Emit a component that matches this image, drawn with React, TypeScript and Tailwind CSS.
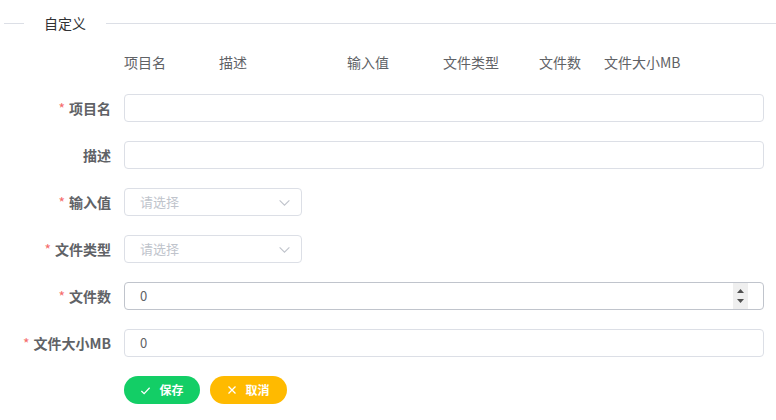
import React from "react";

const font = { fontFamily: '"Noto Sans CJK SC", "Noto Sans", sans-serif' };

function Label({ text, req }: { text: string; req?: boolean }) {
  return (
    <div className="w-[124px] shrink-0 pr-[13px] flex items-center justify-end text-[14px] font-bold text-[#606266]">
      {req && <span className="text-[#f56c6c] mr-[4px] font-normal">*</span>}
      <span>{text}</span>
    </div>
  );
}

function Chevron() {
  return (
    <svg width="13" height="13" viewBox="0 0 12 12" fill="none" stroke="#c0c4cc" strokeWidth="1">
      <path d="M1.5 4 L6 8.5 L10.5 4" />
    </svg>
  );
}

function Select() {
  return (
    <div className="w-[178px] h-[28px] border border-[#dcdfe6] rounded-[4px] flex items-center justify-between pl-[15px] pr-[10px] text-[13px] text-[#c0c4cc]">
      <span>请选择</span>
      <Chevron />
    </div>
  );
}

function Input({ value, hover }: { value?: string; hover?: boolean }) {
  return (
    <div
      className={`flex-1 h-[28px] border rounded-[4px] flex items-center pl-[15px] text-[13px] text-[#606266] ${
        hover ? "border-[#c0c4cc]" : "border-[#dcdfe6]"
      }`}
    >
      <span className="flex-1">{value}</span>
    </div>
  );
}

function NumberInput() {
  return (
    <div className="flex-1 h-[28px] border border-[#c0c4cc] rounded-[4px] flex items-center pl-[15px] pr-[15px] text-[13px] text-[#606266]">
      <span className="flex-1">0</span>
      <div className="w-[15px] h-[26px] bg-[#efefef] flex flex-col items-center justify-center gap-[6px]">
        <svg width="7" height="4" viewBox="0 0 7 4">
          <path d="M0 4 L3.5 0 L7 4 Z" fill="#505050" />
        </svg>
        <svg width="7" height="4" viewBox="0 0 7 4">
          <path d="M0 0 L3.5 4 L7 0 Z" fill="#505050" />
        </svg>
      </div>
    </div>
  );
}

export default function App() {
  return (
    <div className="w-[776px] h-[420px] bg-white overflow-hidden" style={font}>
      <div className="h-[46px] flex items-center">
        <div className="ml-[4px] w-[20px] h-px bg-[#dcdfe6]" />
        <span className="px-[20px] text-[14px] text-[#303133]">自定义</span>
        <div className="flex-1 h-px bg-[#dcdfe6]" />
      </div>
      <div className="h-[32px] flex items-center pl-[124px] text-[14px] text-[#606266]">
        <span className="w-[95px]">项目名</span>
        <span className="w-[128px]">描述</span>
        <span className="w-[96px]">输入值</span>
        <span className="w-[96px]">文件类型</span>
        <span className="w-[65px]">文件数</span>
        <span>文件大小MB</span>
      </div>
      <div className="mt-[16px] flex flex-col gap-[19px] pr-[12px]">
        <div className="flex h-[28px]">
          <Label text="项目名" req />
          <Input />
        </div>
        <div className="flex h-[28px]">
          <Label text="描述" />
          <Input />
        </div>
        <div className="flex h-[28px]">
          <Label text="输入值" req />
          <Select />
        </div>
        <div className="flex h-[28px]">
          <Label text="文件类型" req />
          <Select />
        </div>
        <div className="flex h-[28px]">
          <Label text="文件数" req />
          <NumberInput />
        </div>
        <div className="flex h-[28px]">
          <Label text="文件大小MB" req />
          <Input value="0" />
        </div>
        <div className="flex h-[28px] pl-[124px] gap-[10px]">
          <button className="w-[76px] h-[28px] rounded-full bg-[#13ce66] text-white text-[12px] font-bold flex items-center justify-center gap-[8px]">
            <svg width="11" height="11" viewBox="0 0 12 12" fill="none" stroke="white" strokeWidth="1.3">
              <path d="M1.5 6.5 L4.5 9.5 L10.5 3" />
            </svg>
            <span>保存</span>
          </button>
          <button className="w-[77px] h-[28px] rounded-full bg-[#ffba00] text-white text-[12px] font-bold flex items-center justify-center gap-[8px]">
            <svg width="10" height="10" viewBox="0 0 10 10" fill="none" stroke="white" strokeWidth="1.3">
              <path d="M1.5 1.5 L8.5 8.5 M8.5 1.5 L1.5 8.5" />
            </svg>
            <span>取消</span>
          </button>
        </div>
      </div>
    </div>
  );
}
